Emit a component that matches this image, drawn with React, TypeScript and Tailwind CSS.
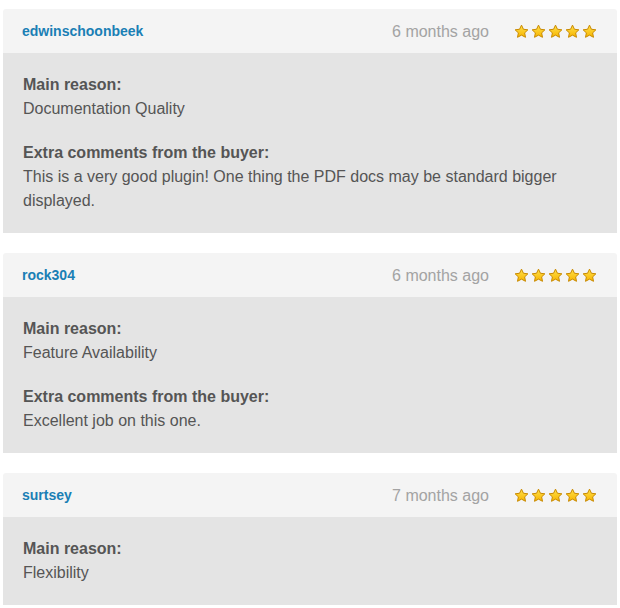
const reviews = [
  {
    user: 'edwinschoonbeek',
    when: '6 months ago',
    reason: 'Documentation Quality',
    comment: 'This is a very good plugin! One thing the PDF docs may be standard bigger displayed.',
  },
  {
    user: 'rock304',
    when: '6 months ago',
    reason: 'Feature Availability',
    comment: 'Excellent job on this one.',
  },
  {
    user: 'surtsey',
    when: '7 months ago',
    reason: 'Flexibility',
  },
]

function Star() {
  return (
    <svg width="15" height="15" viewBox="0 0 24 24">
      <defs>
        <linearGradient id="sg" x1="0" y1="0" x2="0" y2="1">
          <stop offset="0" stopColor="#ffe04a" />
          <stop offset="1" stopColor="#f7b500" />
        </linearGradient>
      </defs>
      <path
        d="M12 1.8l3.1 6.6 7.1.9-5.2 4.9 1.4 7.1L12 17.8l-6.4 3.5 1.4-7.1-5.2-4.9 7.1-.9z"
        fill="url(#sg)"
        stroke="#c98a00"
        strokeWidth="1.6"
        strokeLinejoin="round"
      />
    </svg>
  )
}

export default function App() {
  return (
    <div className="bg-white w-[620px] h-[608px] overflow-hidden pt-[9px] pl-[3px] font-['Liberation_Sans',Arial,sans-serif]">
      <div className="w-[614px] flex flex-col gap-5">
        {reviews.map((r) => (
          <div key={r.user}>
            <div className="h-[44px] bg-[#f4f4f4] rounded-t-[3px] flex items-center pl-[19px] pr-[20px]">
              <span className="text-[14px] font-bold text-[#1a7fb5]">{r.user}</span>
              <span className="ml-auto text-[16px] text-[#a3a3a3] mr-[25px] mt-[1px]">{r.when}</span>
              <div className="flex gap-[2px]">
                {[0, 1, 2, 3, 4].map((i) => (
                  <Star key={i} />
                ))}
              </div>
            </div>
            <div className="bg-[#e4e4e4] px-5 py-5 text-[16px] leading-6 text-[#555]">
              <div className="font-bold">Main reason:</div>
              <div>{r.reason}</div>
              {r.comment && (
                <>
                  <div className="font-bold mt-5">Extra comments from the buyer:</div>
                  <div className="pr-[40px]">{r.comment}</div>
                </>
              )}
            </div>
          </div>
        ))}
      </div>
    </div>
  )
}
